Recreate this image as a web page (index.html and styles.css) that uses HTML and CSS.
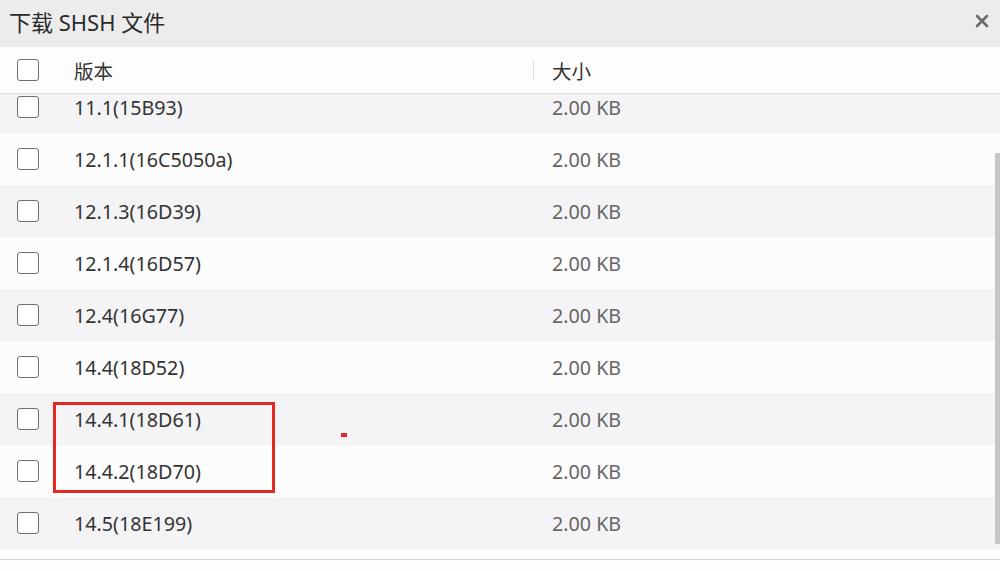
FILE: index.html
```html
<!DOCTYPE html>
<html lang="zh-CN">
<head>
  <meta charset="UTF-8" />
  <title>下载 SHSH 文件</title>
  <link rel="stylesheet" href="styles.css">
</head>
<body>

<div class="dialog">
  <!-- Title bar -->
  <div class="titlebar">
    <div class="title">下载 SHSH 文件</div>
    <svg class="close" width="14" height="14" viewBox="0 0 14 14">
      <path d="M2 2 L12 12 M12 2 L2 12" stroke="#6a6a6a" stroke-width="2.6" stroke-linecap="round"/>
    </svg>
  </div>

  <!-- Table header -->
  <div class="thead">
    <div class="cell-check"><span class="checkbox"></span></div>
    <div class="cell-version">版本</div>
    <div class="col-sep"></div>
    <div class="cell-size">大小</div>
  </div>

  <!-- Table body -->
  <div class="tbody">
    <div class="rows">
      <div class="row"><div class="cell-check"><span class="checkbox"></span></div><div class="cell-version">11.1(15B93)</div><div class="cell-size">2.00 KB</div></div>
      <div class="row"><div class="cell-check"><span class="checkbox"></span></div><div class="cell-version">12.1.1(16C5050a)</div><div class="cell-size">2.00 KB</div></div>
      <div class="row"><div class="cell-check"><span class="checkbox"></span></div><div class="cell-version">12.1.3(16D39)</div><div class="cell-size">2.00 KB</div></div>
      <div class="row"><div class="cell-check"><span class="checkbox"></span></div><div class="cell-version">12.1.4(16D57)</div><div class="cell-size">2.00 KB</div></div>
      <div class="row"><div class="cell-check"><span class="checkbox"></span></div><div class="cell-version">12.4(16G77)</div><div class="cell-size">2.00 KB</div></div>
      <div class="row"><div class="cell-check"><span class="checkbox"></span></div><div class="cell-version">14.4(18D52)</div><div class="cell-size">2.00 KB</div></div>
      <div class="row"><div class="cell-check"><span class="checkbox"></span></div><div class="cell-version">14.4.1(18D61)</div><div class="cell-size">2.00 KB</div></div>
      <div class="row"><div class="cell-check"><span class="checkbox"></span></div><div class="cell-version">14.4.2(18D70)</div><div class="cell-size">2.00 KB</div></div>
      <div class="row"><div class="cell-check"><span class="checkbox"></span></div><div class="cell-version">14.5(18E199)</div><div class="cell-size">2.00 KB</div></div>
    </div>

    <!-- annotation + scrollbar overlays -->
    <div class="highlight-box"></div>
    <div class="mark-dot"></div>
    <div class="scroll-thumb"></div>
  </div>

  <div class="footer"></div>
</div>

</body>
</html>
```

FILE: styles.css
```css
* {
  margin: 0;
  padding: 0;
  box-sizing: border-box;
  font-family: 'Noto Sans', 'Noto Sans CJK SC', sans-serif;
}

body {
  background: #fdfdfd;
  width: 1000px;
  height: 571px;
  overflow: hidden;
}

.dialog {
  display: flex;
  flex-direction: column;
  height: 571px;
  background: #fdfdfd;
}

.titlebar {
  height: 47px;
  background: #ececec;
  display: flex;
  align-items: center;
  justify-content: space-between;
  padding: 0 11px 6px 9px;
}

.title {
  font-size: 22px;
  color: #2a2a2a;
}

.close {
  margin-top: 1px;
}

.thead {
  height: 47px;
  display: flex;
  align-items: center;
  background: #fdfdfd;
  border-bottom: 1px solid #dcdcdc;
  font-size: 19.5px;
  color: #333;
}

.cell-check {
  width: 74px;
  padding-left: 17px;
  display: flex;
  align-items: center;
}

.checkbox {
  display: block;
  width: 22px;
  height: 22px;
  border: 1.5px solid #707070;
  border-radius: 3px;
  background: #fff;
}

.cell-version {
  width: 459px;
}

.col-sep {
  width: 1px;
  height: 20px;
  background: #dedede;
  margin-right: 18px;
}

.tbody {
  position: relative;
  height: 465px;
  overflow: hidden;
}

.rows {
  margin-top: -13px;
}

.row {
  height: 52px;
  display: flex;
  align-items: center;
  font-size: 19.7px;
  color: #333;
  background: #fdfcfd;
}

.row:nth-child(odd) {
  background: #f4f3f5;
}

.row .cell-version {
  width: 478px;
}

.row .cell-size {
  color: #666;
}

.highlight-box {
  position: absolute;
  left: 53px;
  top: 308px;
  width: 222px;
  height: 91px;
  border: 3px solid #e12a22;
}

.mark-dot {
  position: absolute;
  left: 341px;
  top: 339px;
  width: 6px;
  height: 4px;
  background: #e12a22;
}

.scroll-thumb {
  position: absolute;
  right: 0;
  top: 59px;
  width: 5px;
  height: 391px;
  background: #c6c6c6;
  border-radius: 2px 0 0 2px;
}

.footer {
  flex: 1;
  border-top: 1px solid #d6d6d6;
  background: #fdfdfd;
}
```
